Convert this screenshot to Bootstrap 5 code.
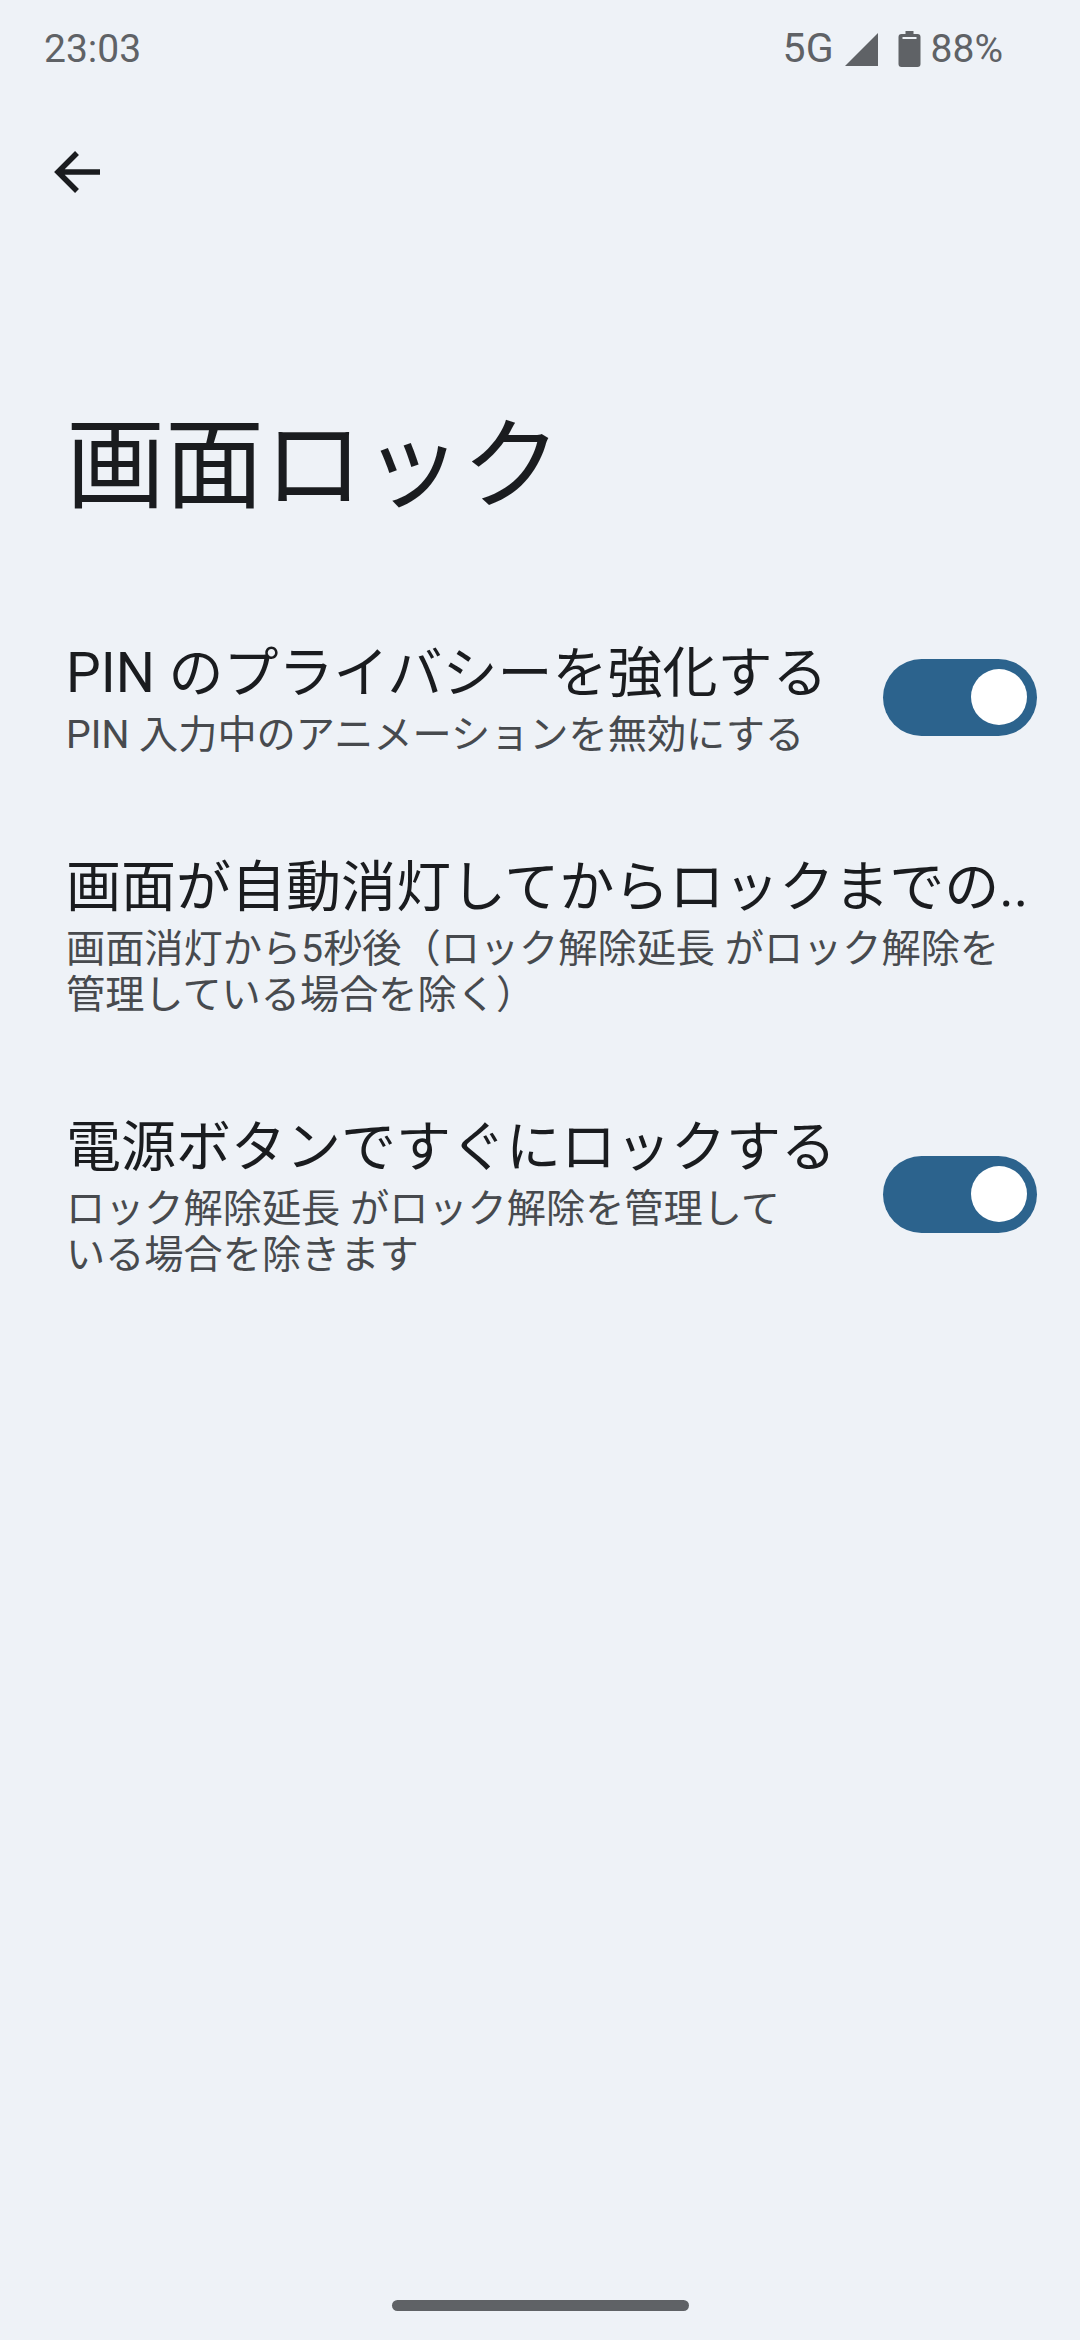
<!DOCTYPE html>
<html lang="ja">
<head>
  <meta charset="UTF-8" />
  <meta name="viewport" content="width=device-width, initial-scale=1.0"/>
  <title>画面ロック</title>
  <link href="https://cdn.jsdelivr.net/npm/bootstrap@5.3.0/dist/css/bootstrap.min.css" rel="stylesheet"/>
  <style>
    body {
      background-color: #eef2f7;
      font-family: Roboto, "Noto Sans CJK JP", sans-serif;
      color: #1a1c1f;
      width: 1080px;
      height: 2340px;
      overflow: hidden;
    }
    .screen { height: 2340px; }
    .status-bar {
      height: 98px;
      padding: 0 77px 0 44px;
      color: #5f6266;
      font-size: 39px;
    }
    .status-net { font-size: 41px; margin-right: 11px; }
    .status-signal { margin-right: 20px; }
    .status-batt { margin-right: 10px; }
    .back-row { height: 148px; padding-left: 50px; }
    .page-title {
      font-size: 99px;
      font-weight: 400;
      line-height: 130px;
      margin: 155px 0 0 66px;
    }
    .pref-list { margin-top: 105px; padding-left: 66px; }
    .pref-row { margin-bottom: 92px; }
    .pref-title {
      font-size: 55px;
      line-height: 74px;
      white-space: nowrap;
    }
    .pref-sub {
      font-size: 39.2px;
      line-height: 46px;
      color: #474a4e;
      margin-top: 2px;
    }
    .pref-text { width: 745px; }
    .pref-wide { width: 965px; }
    .sw-track {
      width: 154px;
      height: 77px;
      border-radius: 39px;
      background-color: #2c638d;
      margin: 0 43px 0 0;
      padding-right: 10px;
    }
    .sw-thumb {
      width: 56px;
      height: 56px;
      border-radius: 50%;
      background-color: #fff;
    }
    .nav-pill {
      width: 297px;
      height: 11px;
      border-radius: 6px;
      background-color: #5f6266;
      margin: auto auto 29px;
    }
  </style>
</head>
<body>
  <div class="screen d-flex flex-column">
    <div class="status-bar d-flex align-items-center justify-content-between">
      <span>23:03</span>
      <div class="d-flex align-items-center">
        <span class="status-net">5G</span>
        <svg class="status-signal" width="33" height="33" viewBox="0 0 34 34"><path d="M34 0V34H0Z" fill="#5f6266"/></svg>
        <svg class="status-batt" width="23" height="36" viewBox="0 0 22 36"><path d="M7 0h8v3h4a3 3 0 0 1 3 3v27a3 3 0 0 1-3 3H3a3 3 0 0 1-3-3V6a3 3 0 0 1 3-3h4Z" fill="#5f6266"/><rect x="4" y="6" width="14" height="2" fill="#eef2f7"/></svg>
        <span>88%</span>
      </div>
    </div>
    <div class="back-row d-flex align-items-center">
      <svg width="56" height="56" viewBox="0 0 56 56" fill="none" stroke="#1a1c1f" stroke-width="5.5"><path d="M50 28H9M27 9 8 28l19 19"/></svg>
    </div>
    <h1 class="page-title">画面ロック</h1>
    <div class="pref-list">
      <div class="pref-row d-flex align-items-center justify-content-between">
        <div class="pref-text">
          <div class="pref-title">PIN のプライバシーを強化する</div>
          <div class="pref-sub">PIN 入力中のアニメーションを無効にする</div>
        </div>
        <div class="sw-track d-flex align-items-center justify-content-end"><div class="sw-thumb"></div></div>
      </div>
      <div class="pref-row">
        <div class="pref-wide">
          <div class="pref-title">画面が自動消灯してからロックまでの..</div>
          <div class="pref-sub">画面消灯から5秒後（ロック解除延長 がロック解除を管理している場合を除く）</div>
        </div>
      </div>
      <div class="pref-row d-flex align-items-center justify-content-between">
        <div class="pref-text">
          <div class="pref-title">電源ボタンですぐにロックする</div>
          <div class="pref-sub">ロック解除延長 がロック解除を管理している場合を除きます</div>
        </div>
        <div class="sw-track d-flex align-items-center justify-content-end"><div class="sw-thumb"></div></div>
      </div>
    </div>
    <div class="nav-pill"></div>
  </div>
</body>
</html>
